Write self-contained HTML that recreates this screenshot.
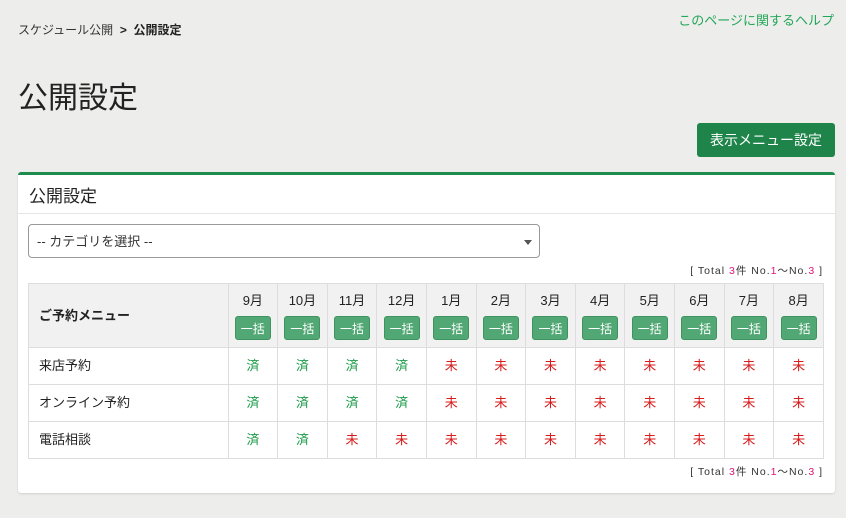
<!DOCTYPE html>
<html><head><meta charset="utf-8"><style>
*{box-sizing:border-box;margin:0;padding:0}
body{width:846px;height:518px;background:#edeeec;font-family:"Liberation Sans","Noto Sans CJK JP",sans-serif;color:#222;position:relative;overflow:hidden}
.bc{position:absolute;left:18px;top:21px;font-size:12px;color:#333}
.bc b{font-weight:bold;color:#222}
.help{position:absolute;right:12px;top:10px;font-size:13px;color:#22a657}
h1{position:absolute;left:18px;top:73px;font-size:30px;font-weight:normal;color:#222}
.btn{position:absolute;left:697px;top:123px;width:138px;height:34px;background:#1e8449;color:#fff;border-radius:3px;font-size:14px;text-align:center;line-height:34px}
.card{position:absolute;left:18px;top:172px;width:817px;height:321px;background:#fff;border-top:3px solid #1e8c4c;border-radius:3px;box-shadow:0 1px 2px rgba(0,0,0,.12)}
.ch{height:39px;border-bottom:1px solid #e6e6e6;font-size:17px;padding:7px 0 0 11px}
.sel{position:absolute;left:10px;top:49px;width:512px;height:34px;border:1px solid #999;border-radius:4px;font-size:13px;padding:6px 0 0 8px;color:#333}
.sel:after{content:"";position:absolute;right:7px;top:15px;border:4px solid transparent;border-top:5px solid #555}
.tot{position:absolute;right:12px;font-size:10.5px;letter-spacing:1px;color:#333}
.tot i{font-style:normal;color:#e0137a}
table{position:absolute;left:10px;top:108px;width:796px;border-collapse:collapse;font-size:13px}
td,th{border:1px solid #ddd;text-align:center}
th{background:#f1f1f1;font-weight:normal;height:64px;width:49.67px;padding-top:6px;vertical-align:top}
th.m{width:200px;text-align:left;font-weight:bold;padding-left:10px;vertical-align:middle;padding-top:0;padding-bottom:2px}
th span{display:block;margin:7px auto 0;width:36px;height:24px;background:#52a874;color:#fff;border-radius:3px;line-height:24px;font-size:12px;border:1px solid #3f935f}
td{height:37px;padding-bottom:4px}
td.n{text-align:left;padding-left:10px}
.g{color:#1e9c4a}.r{color:#d81b1b}
</style></head><body>
<div class="bc">スケジュール公開 &nbsp;<b>&gt;</b>&nbsp; <b>公開設定</b></div>
<div class="help">このページに関するヘルプ</div>
<h1>公開設定</h1>
<div class="btn">表示メニュー設定</div>
<div class="card">
<div class="ch">公開設定</div>
<div class="sel">-- カテゴリを選択 --</div>
<div class="tot" style="top:88px">[ Total <i>3</i>件 No.<i>1</i>～No.<i>3</i> ]</div>
<table>
<tr><th class="m">ご予約メニュー</th><th>9月<span>一括</span></th><th>10月<span>一括</span></th><th>11月<span>一括</span></th><th>12月<span>一括</span></th><th>1月<span>一括</span></th><th>2月<span>一括</span></th><th>3月<span>一括</span></th><th>4月<span>一括</span></th><th>5月<span>一括</span></th><th>6月<span>一括</span></th><th>7月<span>一括</span></th><th>8月<span>一括</span></th></tr>
<tr><td class="n">来店予約</td><td class="g">済</td><td class="g">済</td><td class="g">済</td><td class="g">済</td><td class="r">未</td><td class="r">未</td><td class="r">未</td><td class="r">未</td><td class="r">未</td><td class="r">未</td><td class="r">未</td><td class="r">未</td></tr>
<tr><td class="n">オンライン予約</td><td class="g">済</td><td class="g">済</td><td class="g">済</td><td class="g">済</td><td class="r">未</td><td class="r">未</td><td class="r">未</td><td class="r">未</td><td class="r">未</td><td class="r">未</td><td class="r">未</td><td class="r">未</td></tr>
<tr><td class="n">電話相談</td><td class="g">済</td><td class="g">済</td><td class="r">未</td><td class="r">未</td><td class="r">未</td><td class="r">未</td><td class="r">未</td><td class="r">未</td><td class="r">未</td><td class="r">未</td><td class="r">未</td><td class="r">未</td></tr>
</table>
<div class="tot" style="top:289px">[ Total <i>3</i>件 No.<i>1</i>～No.<i>3</i> ]</div>
</div>
</body></html>
